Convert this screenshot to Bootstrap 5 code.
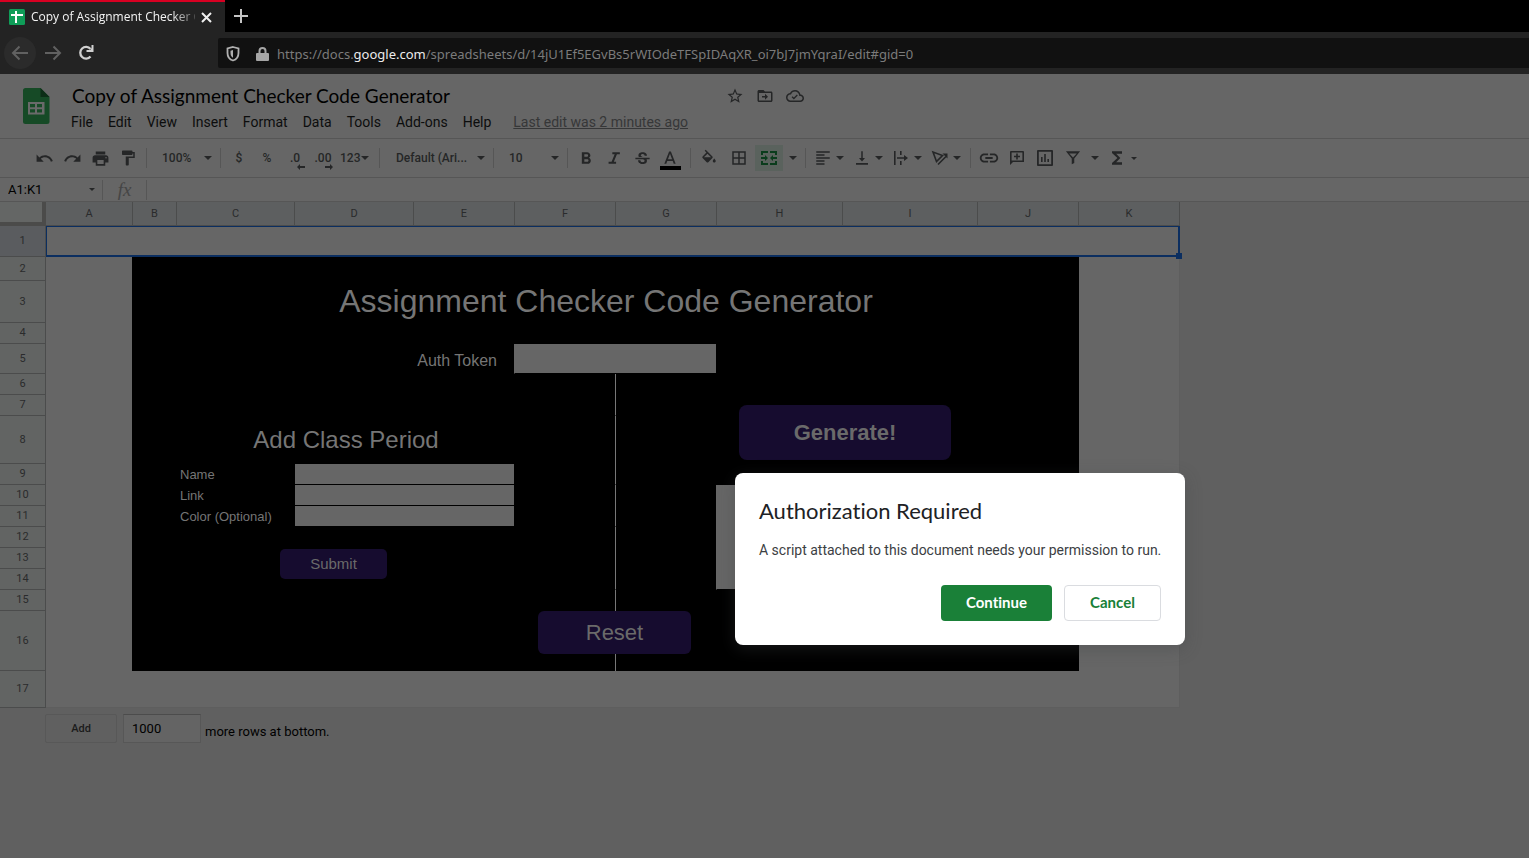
<!DOCTYPE html>
<html lang="en">
<head>
<meta charset="utf-8">
<meta name="viewport" content="width=device-width, initial-scale=1">
<title>Copy of Assignment Checker Code Generator</title>
<link href="https://cdn.jsdelivr.net/npm/bootstrap@5.3.0/dist/css/bootstrap.min.css" rel="stylesheet">
<script src="https://cdn.jsdelivr.net/npm/bootstrap@5.3.0/dist/js/bootstrap.bundle.min.js" defer></script>
<style>
  :root { --dim: #666; --line: #565656; --ink: #252627; --grid: #4b4c4c; --ui: Roboto, sans-serif; --display: Lato, sans-serif; --chrome: "Open Sans", sans-serif; --arial: "Liberation Sans", sans-serif; }
  body { background: #606060; color: #000; font-family: var(--ui); font-size: 14px; line-height: 20px; }
  svg { display: block; flex: none; }
  svg:not([fill]) { fill: currentColor; }
  button { padding: 0; border: 0; background: none; color: inherit; }

  /* browser frame */
  .tabstrip { background: #000; height: 32px; }
  .tab-item { width: 225px; background: #232323; border-top: 2px solid #d70022; color: #f4f4f4; font: 12px/30px var(--chrome); padding: 0 13px 0 9px; gap: 6px; }
  .tab-title { width: 164px; -webkit-mask-image: linear-gradient(90deg, #000 140px, transparent 172px); mask-image: linear-gradient(90deg, #000 140px, transparent 172px); }
  .navstrip { background: #232323; height: 42px; color: #c8c8c8; padding-left: 4px; }
  .back-btn { width: 32px; height: 32px; border-radius: 50%; background: #2b2b2b; color: #616161; }
  .url-box { background: #111; height: 30px; border-radius: 2px 0 0 2px; margin-left: 124px; padding: 2px 0 0 8px; font: 13px/28px "Noto Sans", sans-serif; color: #7b7b7b; }
  .url-box b { font-weight: 400; color: #ececec; }

  /* document header */
  .doc-head { background: var(--dim); height: 65px; border-bottom: 1px solid var(--line); padding: 12px 0 0 23px; gap: 22px; }
  .doc-logo { margin-top: 2px; }
  .doc-title { font: 19px/20px var(--display); width: 654px; margin: 0; }
  .doc-actions { gap: 12px; color: var(--ink); }
  .menu-row { gap: 15px; color: #0c0d0d; margin: 6px 0 0 -1px; }
  .menu-row a { color: inherit; text-decoration: none; }
  .menu-row a.last-edit { color: #363738; text-decoration: underline; margin-left: 7px; }

  /* toolbar */
  .tools { background: var(--dim); height: 39px; border-bottom: 1px solid var(--line); color: var(--ink); font-weight: 500; font-size: 12px; }
  .tool-group { display: flex; align-items: center; padding: 0 6px 0 4px; }
  .tool-group.even { padding-right: 4px; }
  .tool-group.first { padding-left: 30px; }
  .tool-group.spaced { gap: 2px; }
  .divider { width: 1px; height: 20px; background: var(--line); }
  .tool { width: 28px; height: 26px; display: flex; align-items: center; justify-content: center; font-weight: 500; }
  .tool.slim { width: 16px; }
  .tool.formats { width: 38px; justify-content: flex-start; padding-left: 3px; gap: 1px; }
  .tool.split { width: 39px; gap: 4px; justify-content: flex-start; padding-left: 4px; }
  .tool.active { background: #5a625d; color: #0a3c1c; }
  .tool.text-color { flex-direction: column; padding-top: 3px; }
  .tool.text-color i { width: 21px; height: 4px; background: #000; }
  .decimals { position: relative; }
  .decimals svg { position: absolute; right: 4px; bottom: 1px; }
  .form-select.pick { --bs-form-select-bg-img: url("data:image/svg+xml,%3Csvg xmlns='http://www.w3.org/2000/svg' viewBox='0 0 8 4'%3E%3Cpath fill='%23252627' d='M0 0h8L4 4z'/%3E%3C/svg%3E"); background-color: transparent; background-position: right 8px center; background-size: 8px 4px; border: 0; color: inherit; font: inherit; padding: 0 20px 0 15px; width: 73px; height: 26px; border-radius: 0; }
  .form-select.pick.wide { width: 113px; padding-left: 16px; }
  .formula { background: var(--dim); height: 24px; border-bottom: 1px solid var(--line); }
  .form-select.pick.range { width: 102px; padding-left: 8px; height: 22px; font-size: 13px; color: #000; background-position: right 7px center; background-size: 6px 3px; }
  .fx { font: italic 19px/22px "Liberation Serif", serif; color: #454545; width: 43px; text-align: center; }
  .formula input { border: 0; background: none; height: 20px; }

  /* spreadsheet */
  .sheet { width: 1180px; }
  .sheet table { table-layout: fixed; width: 1180px; border-collapse: separate; border-spacing: 0; }
  .sheet th { font-weight: 400; font-size: 11px; line-height: 12px; color: #2a2b2c; text-align: center; padding: 0; border-right: 1px solid var(--grid); border-bottom: 1px solid var(--grid); background: #5d5f60; }
  .sheet tbody th { background: #626463; }
  .sheet tbody tr.picked th { background: #5a5c5f; }
  .sheet th.corner { background: #646665; border-right: 4px solid #4b4b4a; border-bottom: 4px solid #4b4b4a; }
  .sheet td { padding: 0; background: #000; color: #757575; font-family: var(--arial); font-size: 13px; line-height: 16px; }
  .sheet td.blank { background: var(--dim); }
  .sheet td.edge { border-right: 1px solid #000; }
  .sheet td.fill-edge { border-right: 1px solid var(--dim); }
  .sheet td.end { border-right: 1px solid #5e5e5e; }
  .sheet td.base { border-bottom: 1px solid #5e5e5e; }
  .sheet td.split-line { border-right: 1px solid #777; }
  .sheet td.cut { border-bottom: 1px solid #000; }
  .sheet td.selected { position: relative; background: var(--dim); border: 1px solid #0b2e60; border-width: 1px 2px 2px 1px; }
  .sheet td.selected::after { content: ""; position: absolute; right: -4px; bottom: -4px; width: 6px; height: 6px; background: #0b2e60; }
  .sheet td h1 { font-size: 32px; line-height: 36px; margin: 0; padding-bottom: 2px; font-weight: 400; }
  .sheet td h2 { font-size: 24px; line-height: 28px; margin: 0; font-weight: 400; }
  .sheet td input { display: block; width: 100%; height: 20px; margin-bottom: 1px; border: 0; border-radius: 0; background: var(--dim); }
  .sheet td input.tall { height: 29px; }
  .sheet td label { display: block; padding: 1px 0 0 3px; }
  .sheet td label.token { font-size: 16px; line-height: 20px; text-align: right; padding: 5px 17px 0 0; }
  .drawn { position: absolute; background: #160c2f; color: #6a6a6a; font-family: var(--arial); }
  .drawn.generate { left: 739px; top: 203px; width: 212px; height: 55px; border-radius: 8px; font-size: 22px; font-weight: 700; }
  .drawn.submit { left: 280px; top: 347px; width: 107px; height: 30px; border-radius: 5px; font-size: 15px; }
  .drawn.reset { left: 538px; top: 409px; width: 153px; height: 43px; border-radius: 6px; font-size: 22px; }
  .add-rows { padding: 6px 0 0 45px; font-size: 13px; }
  .add-rows button { width: 72px; height: 29px; border: 1px solid #585858; border-radius: 2px; color: #1b1b1b; font-size: 11px; font-weight: 500; margin-right: 6px; }
  .add-rows input { width: 78px; height: 29px; border: 1px solid #575757; border-top-color: #4c4c4c; background: #646464; padding: 0 8px; margin-right: 4px; color: #000; }
  .add-rows label { padding-top: 6px; }

  /* permission dialog */
  .ask { position: absolute; left: 735px; top: 473px; width: 450px; padding: 24px; background: #fff; border-radius: 8px; box-shadow: 0 4px 16px rgba(60, 64, 67, .35); color: #3c4043; }
  .ask h2 { font: 22px/28px var(--display); font-variant-ligatures: none; color: #202124; margin: 0 0 15px; }
  .ask p { margin: 0 0 25px; line-height: 20px; white-space: nowrap; }
  .ask-actions { gap: 12px; }
  .ask .btn { font: 700 15px/20px var(--display); font-variant-ligatures: none; height: 36px; padding: 0 0 2px; border-radius: 4px; }
  .ask .btn-go { background: #1a8038; color: #fff; width: 111px; }
  .ask .btn-no { border: 1px solid #dadce0; color: #188038; width: 97px; }
</style>
</head>
<body class="position-relative min-vh-100">

<svg class="d-none" aria-hidden="true">
  <symbol id="caret" viewBox="0 0 8 4"><path d="M0 0h8L4 4z"/></symbol>
</svg>

<div class="tabstrip d-flex align-items-stretch">
  <div class="tab-item d-flex align-items-center">
    <svg width="16" height="16" viewBox="0 0 16 16"><rect width="16" height="16" rx="1.500" fill="#0f9d58"/><path d="M2 5h12v2H8v7H6V7H2zM6 2h2v4H6z" fill="#fff"/></svg>
    <span class="tab-title text-nowrap">Copy of Assignment Checker C</span>
    <button type="button" aria-label="Close tab"><svg width="11" height="11" viewBox="0 0 11 11" fill="none" stroke="#f0f0f0" stroke-width="2"><path d="M1 1l9 9M10 1l-9 9"/></svg></button>
  </div>
  <button type="button" class="ms-2" aria-label="New tab"><svg width="16" height="16" viewBox="0 0 16 16" fill="none" stroke="#c4c4c4" stroke-width="2"><path d="M8 1v14M1 8h14"/></svg></button>
</div>

<div class="navstrip d-flex align-items-center">
  <button type="button" class="back-btn d-flex align-items-center justify-content-center" aria-label="Back"><svg width="18" height="16" viewBox="0 0 18 16" fill="none" stroke="currentColor" stroke-width="2"><path d="M17 8H2M8.500 1.500L2 8l6.500 6.500"/></svg></button>
  <button type="button" class="ms-2" aria-label="Forward"><svg width="18" height="16" viewBox="0 0 18 16" fill="none" stroke="#616161" stroke-width="2"><path d="M1 8h15M9.500 1.500L16 8l-6.500 6.500"/></svg></button>
  <button type="button" class="ms-3" aria-label="Reload"><svg width="16" height="16" viewBox="0 0 16 16"><path d="M12.500 11.500A5.800 5.800 0 1 1 12.500 4" fill="none" stroke="#d0d0d0" stroke-width="2.300"/><path d="M15.500 0v7H8.500v-2h3.700L13.500 3V0z" fill="#d0d0d0"/></svg></button>
  <div class="url-box d-flex align-items-center flex-grow-1">
    <svg width="14" height="16" viewBox="0 0 14 16"><path d="M7 1l5.500 1.500V7c0 4-2 6.500-5.500 7.500C3.500 13.500 1.500 11 1.500 7V2.500z" fill="none" stroke="#b0b0b0" stroke-width="1.800"/><path d="M7 4l-2.500.7V7c0 2.500 1 4 2.500 4.800z" fill="#b0b0b0"/></svg>
    <svg class="ms-3" width="13" height="14" viewBox="0 0 13 14"><path d="M1 6h11a1 1 0 0 1 1 1v6a1 1 0 0 1-1 1H1a1 1 0 0 1-1-1V7a1 1 0 0 1 1-1z" fill="#a5a5a5"/><path d="M3.500 7V4a3 3 0 0 1 6 0v3" fill="none" stroke="#a5a5a5" stroke-width="2"/></svg>
    <span class="text-nowrap ms-2">https://docs.<b>google.com</b>/spreadsheets/d/14jU1Ef5EGvBs5rWIOdeTFSpIDAqXR_oi7bJ7jmYqraI/edit#gid=0</span>
  </div>
</div>

<header class="doc-head d-flex align-items-start">
  <svg class="doc-logo" width="27" height="36" viewBox="0 0 27 36"><path d="M2.500 0H17.500L26.500 9v24.500a2.500 2.500 0 0 1-2.500 2.500H2.500A2.500 2.500 0 0 1 0 33.500v-31A2.500 2.500 0 0 1 2.500 0z" fill="#164a26"/><path d="M17.500 0l9 9h-9z" fill="#0c2d16"/><path d="M5 14h16.500v12.500H5zM7 16v3.200h5V16zm7 0v3.200h5V16zm-7 5.200v3.300h5v-3.300zm7 0v3.300h5v-3.300z" fill="#6a6a6a" fill-rule="evenodd"/></svg>
  <div>
    <div class="d-flex align-items-center">
      <h1 class="doc-title">Copy of Assignment Checker Code Generator</h1>
      <div class="doc-actions d-flex align-items-center">
        <button type="button" aria-label="Star"><svg width="18" height="18" viewBox="0 0 24 24"><path d="M22 9.240l-7.190-.62L12 2 9.190 8.630 2 9.240l5.460 4.730L5.820 21 12 17.270 18.180 21l-1.630-7.030L22 9.240zM12 15.400l-3.760 2.270 1-4.280-3.320-2.880 4.380-.38L12 6.100l1.710 4.040 4.380.38-3.320 2.880 1 4.280L12 15.400z"/></svg></button>
        <button type="button" aria-label="Move"><svg width="18" height="18" viewBox="0 0 24 24"><path d="M20 6h-8l-2-2H4c-1.100 0-2 .9-2 2v12c0 1.100.9 2 2 2h16c1.100 0 2-.9 2-2V8c0-1.100-.9-2-2-2zm0 12H4V8h16v10zm-8-1l4-4-4-4v3H8v2h4z"/></svg></button>
        <button type="button" aria-label="Saved to Drive"><svg width="18" height="18" viewBox="0 0 24 24"><path d="M19.350 10.040C18.670 6.590 15.640 4 12 4 9.110 4 6.600 5.640 5.350 8.040 2.340 8.360 0 10.910 0 14c0 3.310 2.690 6 6 6h13c2.760 0 5-2.240 5-5 0-2.640-2.050-4.780-4.650-4.960zM19 18H6c-2.210 0-4-1.790-4-4 0-2.050 1.530-3.760 3.560-3.970l1.070-.11.5-.95C8.080 7.140 9.940 6 12 6c2.620 0 4.880 1.860 5.390 4.430l.3 1.500 1.530.11c1.560.1 2.780 1.410 2.780 2.960 0 1.650-1.350 3-3 3zM10.500 16.500l-3-3 1.200-1.200 1.800 1.800 4-4 1.200 1.200z"/></svg></button>
      </div>
    </div>
    <nav class="menu-row d-flex text-nowrap">
      <a href="#">File</a><a href="#">Edit</a><a href="#">View</a><a href="#">Insert</a><a href="#">Format</a><a href="#">Data</a><a href="#">Tools</a><a href="#">Add-ons</a><a href="#">Help</a><a href="#" class="last-edit">Last edit was 2 minutes ago</a>
    </nav>
  </div>
</header>

<div class="tools d-flex align-items-center">
  <div class="tool-group first even">
    <button type="button" class="tool" aria-label="Undo"><svg width="19" height="19" viewBox="0 0 24 24"><path d="M12.500 8c-2.650 0-5.050.99-6.900 2.600L2 7v9h9l-3.620-3.620c1.390-1.160 3.160-1.880 5.120-1.880 3.540 0 6.550 2.310 7.600 5.500l2.370-.78C21.080 11.030 17.150 8 12.500 8z"/></svg></button>
    <button type="button" class="tool" aria-label="Redo"><svg width="19" height="19" viewBox="0 0 24 24"><path d="M18.400 10.600C16.550 8.990 14.150 8 11.500 8c-4.650 0-8.580 3.030-9.960 7.220L3.900 16c1.050-3.190 4.050-5.500 7.600-5.500 1.950 0 3.730.72 5.120 1.880L13 16h9V7l-3.600 3.600z"/></svg></button>
    <button type="button" class="tool" aria-label="Print"><svg width="19" height="19" viewBox="0 0 24 24"><path d="M19 8H5c-1.660 0-3 1.340-3 3v6h4v4h12v-4h4v-6c0-1.660-1.340-3-3-3zm-3 11H8v-5h8v5zm3-7c-.55 0-1-.45-1-1s.45-1 1-1 1 .45 1 1-.45 1-1 1zm-1-9H6v4h12V3z"/></svg></button>
    <button type="button" class="tool" aria-label="Paint format"><svg width="18" height="18" viewBox="0 0 24 24"><path d="M18 4V3c0-.55-.45-1-1-1H5c-.55 0-1 .45-1 1v4c0 .55.45 1 1 1h12c.55 0 1-.45 1-1V6h1v4H9v11c0 .55.45 1 1 1h2c.55 0 1-.45 1-1v-9h8V4h-3z"/></svg></button>
  </div>
  <span class="divider"></span>
  <select class="form-select pick" aria-label="Zoom"><option>100%</option></select>
  <span class="divider"></span>
  <div class="tool-group even">
    <button type="button" class="tool">$</button>
    <button type="button" class="tool">%</button>
    <button type="button" class="tool decimals">.0<svg width="8" height="6" viewBox="0 0 8 6"><path d="M0 3l3-3v2h5v2H3v2z"/></svg></button>
    <button type="button" class="tool decimals">.00<svg width="8" height="6" viewBox="0 0 8 6"><path d="M8 3L5 0v2H0v2h5v2z"/></svg></button>
    <button type="button" class="tool formats">123<svg width="8" height="4"><use href="#caret"/></svg></button>
  </div>
  <span class="divider"></span>
  <select class="form-select pick wide" aria-label="Font"><option>Default (Ari...</option></select>
  <span class="divider"></span>
  <select class="form-select pick" aria-label="Font size"><option>10</option></select>
  <span class="divider"></span>
  <div class="tool-group">
    <button type="button" class="tool" aria-label="Bold"><svg width="20" height="20" viewBox="0 0 24 24"><path d="M15.600 11.790c.97-.67 1.650-1.770 1.650-2.790 0-2.260-1.750-4-4-4H7v14h7.040c2.090 0 3.710-1.700 3.710-3.790 0-1.520-.86-2.820-2.150-3.420zM10 7.500h3c.83 0 1.500.67 1.500 1.500s-.67 1.500-1.500 1.500h-3v-3zm3.500 9H10v-3h3.500c.83 0 1.500.67 1.500 1.500s-.67 1.500-1.500 1.500z"/></svg></button>
    <button type="button" class="tool" aria-label="Italic"><svg width="20" height="20" viewBox="0 0 24 24"><path d="M10 5v2.500h2.800l-3.700 9H5.500V19h9v-2.500h-2.700l3.700-9H19V5z"/></svg></button>
    <button type="button" class="tool" aria-label="Strikethrough"><svg width="19" height="19" viewBox="0 0 24 24"><path transform="translate(0 1)" d="M7.240 8.750c-.26-.48-.39-1.030-.39-1.670 0-.61.13-1.160.4-1.670.26-.5.63-.93 1.110-1.290.48-.35 1.050-.63 1.700-.83.66-.19 1.390-.29 2.180-.29.81 0 1.540.11 2.210.34.66.22 1.230.54 1.690.94.47.4.83.88 1.080 1.430s.38 1.150.38 1.810h-3.010c0-.31-.05-.59-.15-.85-.09-.27-.24-.49-.44-.68-.2-.19-.45-.33-.75-.44-.3-.1-.66-.16-1.060-.16-.39 0-.74.04-1.030.13s-.53.21-.72.36c-.19.16-.34.34-.44.55-.1.21-.15.43-.15.66 0 .48.25.88.74 1.210.38.25.77.48 1.410.7H7.390c-.05-.08-.11-.17-.15-.25zM21 12v-2H3v2h9.620c.18.07.4.14.55.2.37.17.66.34.87.51s.35.36.43.57c.07.2.11.43.11.69 0 .23-.05.45-.14.66-.09.2-.23.38-.42.53-.19.15-.42.26-.71.35-.29.08-.63.13-1.010.13-.43 0-.83-.04-1.180-.13s-.66-.23-.91-.42c-.25-.19-.45-.44-.59-.75s-.25-.76-.25-1.210H6.400c0 .55.08 1.130.24 1.580s.37.85.65 1.210c.28.35.6.66.98.92.37.26.78.48 1.220.65.44.17.9.3 1.380.39.48.08.96.13 1.440.13.8 0 1.530-.09 2.180-.28s1.210-.45 1.670-.79c.46-.34.82-.77 1.070-1.270s.38-1.070.38-1.710c0-.6-.1-1.140-.31-1.610-.05-.11-.11-.23-.17-.33H21z"/></svg></button>
    <button type="button" class="tool text-color" aria-label="Text color"><svg width="14" height="16" viewBox="4 2 16 17"><path d="M11 3L5.500 17h2.250l1.120-3h6.250l1.120 3h2.250L13 3h-2zm-1.380 9L12 5.670 14.380 12H9.620z"/></svg><i></i></button>
  </div>
  <span class="divider"></span>
  <div class="tool-group even spaced">
    <button type="button" class="tool" aria-label="Fill color"><svg width="18" height="18" viewBox="0 -1 24 24"><path d="M16.560 8.940L7.620 0 6.210 1.410l2.380 2.380-5.150 5.150c-.59.59-.59 1.540 0 2.120l5.500 5.500c.29.29.68.44 1.060.44s.77-.15 1.060-.44l5.500-5.500c.59-.58.59-1.530 0-2.120zM5.210 10L10 5.210 14.790 10H5.210zM19 11.500s-2 2.170-2 3.500c0 1.100.9 2 2 2s2-.9 2-2c0-1.330-2-3.500-2-3.500z"/></svg></button>
    <button type="button" class="tool" aria-label="Borders"><svg width="18" height="18" viewBox="0 0 24 24"><path d="M3 3v18h18V3H3zm8 16H5v-6h6v6zm0-8H5V5h6v6zm8 8h-6v-6h6v6zm0-8h-6V5h6v6z"/></svg></button>
    <button type="button" class="tool active" aria-label="Merge cells"><svg width="16" height="14" viewBox="0 0 16 14"><path d="M0 0h7v2H2v2H0zM9 0h7v4h-2V2H9zM0 10h2v2h5v2H0zM14 10h2v4H9v-2h5zM0 6h4V4l3 3-3 3V8H0zM16 6h-4V4L9 7l3 3V8h4z"/></svg></button>
    <button type="button" class="tool slim" aria-label="Merge options"><svg width="8" height="4"><use href="#caret"/></svg></button>
  </div>
  <span class="divider"></span>
  <div class="tool-group even">
    <button type="button" class="tool split" aria-label="Horizontal align"><svg width="18" height="18" viewBox="0 0 24 24"><path d="M14 15H3v2h11zM14 7H3v2h11zM3 13h18v-2H3zM3 21h11v-2H3zM3 3v2h18V3z"/></svg><svg width="8" height="4"><use href="#caret"/></svg></button>
    <button type="button" class="tool split" aria-label="Vertical align"><svg width="18" height="18" viewBox="0 0 24 24"><path d="M16 12h-3V3h-2v9H8l4 4.500zM4 18.500V21h16v-2.500z"/></svg><svg width="8" height="4"><use href="#caret"/></svg></button>
    <button type="button" class="tool split" aria-label="Text wrapping"><svg width="18" height="18" viewBox="0 0 18 18"><path d="M2 2h1.600v14H2zM8 2h1.600v4H8zM8 12h1.600v4H8zM5 8.200h7V6l4 3-4 3V9.800H5z"/></svg><svg width="8" height="4"><use href="#caret"/></svg></button>
    <button type="button" class="tool split" aria-label="Text rotation"><svg width="18" height="18" viewBox="0 0 18 18" fill="none" stroke="currentColor" stroke-width="1.600"><path d="M5.500 12.500L2 3l9.500 3.500zM7 15.500l8-8"/><path d="M16.500 4.500v5l-5-5z" fill="currentColor" stroke="none"/></svg><svg width="8" height="4"><use href="#caret"/></svg></button>
  </div>
  <span class="divider"></span>
  <div class="tool-group even">
    <button type="button" class="tool" aria-label="Insert link"><svg width="22" height="22" viewBox="0 0 24 24"><path d="M3.900 12c0-1.710 1.390-3.100 3.100-3.100h4V7H7c-2.760 0-5 2.240-5 5s2.240 5 5 5h4v-1.900H7c-1.710 0-3.100-1.390-3.100-3.100zM8 13h8v-2H8v2zm9-6h-4v1.900h4c1.710 0 3.100 1.390 3.100 3.100s-1.390 3.100-3.100 3.100h-4V17h4c2.760 0 5-2.240 5-5s-2.240-5-5-5z"/></svg></button>
    <button type="button" class="tool" aria-label="Insert comment"><svg width="14" height="14" viewBox="0 0 14 14"><path d="M1 0h12a1 1 0 0 1 1 1v10H3l-3 3V1a1 1 0 0 1 1-1zm.600 1.600v7.900h10.800V1.600zM6.200 2.500h1.600v2.300H10v1.500H7.800v2.300H6.200V6.300H4V4.800h2.200z" fill-rule="evenodd"/></svg></button>
    <button type="button" class="tool" aria-label="Insert chart"><svg width="16" height="16" viewBox="0 0 16 16"><path d="M1 0h14a1 1 0 0 1 1 1v14a1 1 0 0 1-1 1H1a1 1 0 0 1-1-1V1a1 1 0 0 1 1-1zm.800 1.800v12.400h12.400V1.800zM4 7h1.600v5H4zM7.200 4h1.600v8H7.200zM10.400 9H12v3h-1.600z" fill-rule="evenodd"/></svg></button>
    <button type="button" class="tool" aria-label="Create filter"><svg width="20" height="20" viewBox="0 0 24 24"><path d="M7.500 6.500h9L12 11.500zM3.500 4l7 8.500v7l3-1.500v-5.500l7-8.500z" fill-rule="evenodd"/></svg></button>
    <button type="button" class="tool slim" aria-label="Filter views"><svg width="8" height="4"><use href="#caret"/></svg></button>
    <button type="button" class="tool" aria-label="Functions"><svg width="20" height="20" viewBox="0 0 24 24"><path d="M18 4H6v2l6.500 6L6 18v2h12v-3h-7l5-5-5-5h7z"/></svg></button>
    <button type="button" aria-label="More functions"><svg width="6" height="3"><use href="#caret"/></svg></button>
  </div>
</div>

<div class="formula d-flex align-items-center">
  <select class="form-select pick range" aria-label="Name box"><option>A1:K1</option></select>
  <span class="divider"></span>
  <span class="fx">fx</span>
  <span class="divider"></span>
  <input class="flex-grow-1" type="text" aria-label="Formula">
</div>

<main class="sheet position-relative">
  <table>
    <colgroup>
      <col style="width:46px"><col style="width:87px"><col style="width:44px"><col style="width:118px"><col style="width:119px"><col style="width:101px"><col style="width:101px"><col style="width:101px"><col style="width:126px"><col style="width:135px"><col style="width:101px"><col style="width:101px">
    </colgroup>
    <thead>
      <tr style="height:24px"><th class="corner"></th><th>A</th><th>B</th><th>C</th><th>D</th><th>E</th><th>F</th><th>G</th><th>H</th><th>I</th><th>J</th><th>K</th></tr>
    </thead>
    <tbody>
      <tr class="picked" style="height:31px"><th>1</th><td class="selected" colspan="11"></td></tr>
      <tr style="height:24px"><th>2</th><td class="blank edge"></td><td colspan="9"></td><td class="blank end"></td></tr>
      <tr style="height:42px"><th>3</th><td class="blank edge"></td><td colspan="9" class="text-center"><h1>Assignment Checker Code Generator</h1></td><td class="blank end"></td></tr>
      <tr style="height:21px"><th>4</th><td class="blank edge"></td><td colspan="9"></td><td class="blank end"></td></tr>
      <tr style="height:30px"><th>5</th><td class="blank edge"></td><td colspan="4" class="fill-edge cut"><label class="token" for="token">Auth Token</label></td><td colspan="2" class="edge"><input class="tall" id="token" type="text"></td><td colspan="3"></td><td class="blank end"></td></tr>
      <tr style="height:21px"><th>6</th><td class="blank edge"></td><td colspan="4"></td><td class="split-line"></td><td colspan="4"></td><td class="blank end"></td></tr>
      <tr style="height:21px"><th>7</th><td class="blank edge"></td><td colspan="4"></td><td class="split-line cut"></td><td colspan="4"></td><td class="blank end"></td></tr>
      <tr style="height:48px"><th>8</th><td class="blank edge"></td><td></td><td colspan="3" class="text-center"><h2>Add Class Period</h2></td><td class="split-line"></td><td colspan="4"></td><td class="blank end"></td></tr>
      <tr style="height:21px"><th>9</th><td class="blank edge"></td><td></td><td><label for="cname">Name</label></td><td colspan="2" class="edge"><input id="cname" type="text"></td><td class="split-line cut"></td><td colspan="4"></td><td class="blank end"></td></tr>
      <tr style="height:21px"><th>10</th><td class="blank edge"></td><td></td><td><label for="clink">Link</label></td><td colspan="2" class="edge"><input id="clink" type="text"></td><td class="split-line"></td><td class="fill-edge"></td><td class="blank cut" colspan="2" rowspan="5"></td><td></td><td class="blank end"></td></tr>
      <tr style="height:21px"><th>11</th><td class="blank edge"></td><td></td><td><label for="ccolor">Color (Optional)</label></td><td colspan="2" class="edge"><input id="ccolor" type="text"></td><td class="split-line cut"></td><td class="fill-edge"></td><td></td><td class="blank end"></td></tr>
      <tr style="height:21px"><th>12</th><td class="blank edge"></td><td colspan="4"></td><td class="split-line"></td><td class="fill-edge"></td><td></td><td class="blank end"></td></tr>
      <tr style="height:21px"><th>13</th><td class="blank edge"></td><td colspan="4"></td><td class="split-line"></td><td class="fill-edge"></td><td></td><td class="blank end"></td></tr>
      <tr style="height:21px"><th>14</th><td class="blank edge"></td><td colspan="4"></td><td class="split-line cut"></td><td class="fill-edge cut"></td><td></td><td class="blank end"></td></tr>
      <tr style="height:21px"><th>15</th><td class="blank edge"></td><td colspan="4"></td><td class="split-line"></td><td colspan="4"></td><td class="blank end"></td></tr>
      <tr style="height:60px"><th>16</th><td class="blank edge"></td><td colspan="4"></td><td class="split-line"></td><td colspan="4"></td><td class="blank end"></td></tr>
      <tr style="height:37px"><th>17</th><td class="blank end base" colspan="11"></td></tr>
    </tbody>
  </table>
  <button type="button" class="drawn generate">Generate!</button>
  <button type="button" class="drawn submit">Submit</button>
  <button type="button" class="drawn reset">Reset</button>
</main>

<div class="add-rows d-flex align-items-center">
  <button type="button">Add</button>
  <input id="more-rows" type="text" value="1000">
  <label for="more-rows">more rows at bottom.</label>
</div>

<section class="ask" role="dialog" aria-labelledby="ask-title">
  <h2 id="ask-title">Authorization Required</h2>
  <p>A script attached to this document needs your permission to run.</p>
  <div class="ask-actions d-flex justify-content-end">
    <button type="button" class="btn btn-go">Continue</button>
    <button type="button" class="btn btn-no">Cancel</button>
  </div>
</section>

</body>
</html>
